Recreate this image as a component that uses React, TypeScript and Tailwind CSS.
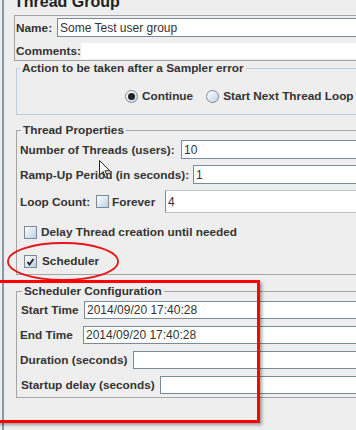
import React from "react";

const Field = ({ value = "", className = "" }: { value?: string; className?: string }) => (
  <div
    className={`flex flex-1 items-center border border-[#7a8a99] bg-white pl-[2px] text-[12px] font-normal text-[#333] ${className}`}
  >
    {value}
  </div>
);

const Check = ({ checked = false }: { checked?: boolean }) => (
  <span className="flex h-[13px] w-[13px] shrink-0 items-center justify-center border border-[#7a8a99] bg-linear-to-br from-white to-[#bccfe2]">
    {checked && (
      <svg width="9" height="9" viewBox="0 0 9 9">
        <path d="M1.5 5 L3.5 7.5 L7.5 2" fill="none" stroke="#222" strokeWidth="1.8" />
      </svg>
    )}
  </span>
);

const Radio = ({ selected = false }: { selected?: boolean }) => (
  <span className="flex h-[13px] w-[13px] shrink-0 items-center justify-center rounded-full border border-[#7a8a99] bg-linear-to-br from-white to-[#c4d4e4]">
    {selected && <span className="h-[7px] w-[7px] rounded-full bg-[#222]" />}
  </span>
);

export default function App() {
  return (
    <div className="relative h-[430px] w-[356px] overflow-hidden bg-[#eeeeee] font-['Liberation_Sans',Arial,sans-serif] text-[11.8px] font-bold leading-[14px] text-[#333333]">
      <div className="flex h-full">
        <div className="ml-[2px] w-[2px] shrink-0 bg-[#8596a8]" />

        <div className="ml-[10px] w-[420px] shrink-0">
          <h1 className="-mt-[6px] h-[16px] text-[16px] leading-[16px] font-bold text-[#222]">
            Thread Group
          </h1>

          {/* name + comments */}
          <div className="mt-[5px] border border-[#a3a3a3] pt-[2px] pb-[1px]">
            <div className="flex h-[19px] items-center">
              <span className="w-[42px] shrink-0 pl-[1px]">Name:</span>
              <Field value="Some Test user group" className="h-full" />
            </div>
            <div className="mt-[6px] flex h-[16px] items-center">
              <span className="w-[66px] shrink-0 pl-[1px]">Comments:</span>
              <div className="h-full flex-1 bg-white" />
            </div>
          </div>

          {/* sampler error action */}
          <fieldset className="ml-[2px] border border-[#b8cfe5] pt-[14px] pb-[11px]">
            <legend className="ml-[3px] px-[2px] leading-[14px]">
              Action to be taken after a Sampler error
            </legend>
            <div className="flex h-[14px] items-center pl-[108px]">
              <Radio selected />
              <span className="ml-[4px]">Continue</span>
              <span className="ml-[13px]">
                <Radio />
              </span>
              <span className="ml-[4px] whitespace-nowrap">Start Next Thread Loop</span>
            </div>
          </fieldset>

          {/* thread properties */}
          <fieldset className="mt-[8px] ml-[2px] border border-[#a5a5a5] pb-[6px]">
            <legend className="ml-[4px] px-[2px] leading-[14px]">Thread Properties</legend>
            <div className="mt-[3px] flex h-[19px] items-center pl-[3px]">
              <span className="w-[161px] shrink-0 whitespace-nowrap">Number of Threads (users):</span>
              <Field value="10" className="h-full" />
            </div>
            <div className="mt-[6px] flex h-[19px] items-center pl-[3px]">
              <span className="w-[173px] shrink-0 whitespace-nowrap">Ramp-Up Period (in seconds):</span>
              <Field value="1" className="h-full" />
            </div>
            <div className="mt-[6px] flex h-[23px] items-center pl-[3px]">
              <span className="w-[76px] shrink-0">Loop Count:</span>
              <Check />
              <span className="ml-[3px] w-[53px] shrink-0">Forever</span>
              <Field value="4" className="h-full border-[#b9c3cd] border-l-[#7a8a99]" />
            </div>
            <div className="mt-[12px] flex h-[14px] items-center pl-[7px]">
              <Check />
              <span className="ml-[4px]">Delay Thread creation until needed</span>
            </div>
            <div className="mt-[15px] flex h-[14px] items-center pl-[7px]">
              <Check checked />
              <span className="ml-[5px]">Scheduler</span>
            </div>
          </fieldset>

          {/* scheduler configuration */}
          <fieldset className="mt-[9px] ml-[2px] border border-[#a5a5a5] pt-[3px] pb-[3px]">
            <legend className="ml-[5px] px-[2px] leading-[14px]">Scheduler Configuration</legend>
            <div className="flex flex-col gap-[7px] pl-[3px]">
              <div className="flex h-[18px] items-center">
                <span className="w-[64px] shrink-0 pl-[1px]">Start Time</span>
                <Field value="2014/09/20 17:40:28" className="h-full" />
              </div>
              <div className="flex h-[18px] items-center">
                <span className="w-[63px] shrink-0">End Time</span>
                <Field value="2014/09/20 17:40:28" className="h-full" />
              </div>
              <div className="flex h-[18px] items-center">
                <span className="w-[113px] shrink-0">Duration (seconds)</span>
                <Field className="h-full" />
              </div>
              <div className="flex h-[18px] items-center">
                <span className="w-[140px] shrink-0 pl-[1px] whitespace-nowrap">Startup delay (seconds)</span>
                <Field className="h-full" />
              </div>
            </div>
          </fieldset>
        </div>
      </div>

      {/* annotation: ellipse around Scheduler */}
      <svg className="pointer-events-none absolute top-[240px] left-[5px]" width="120" height="44" viewBox="0 0 120 44">
        <ellipse cx="58" cy="21.5" rx="55" ry="18.5" fill="none" stroke="#e8151b" strokeWidth="1.8" />
      </svg>

      {/* annotation: red box */}
      <div className="pointer-events-none absolute top-[280px] -left-[10px] h-[143px] w-[270px] border-[3px] border-[#ff0000] shadow-[2px_2px_3px_rgba(0,0,0,0.35)]" />

      {/* mouse cursor */}
      <svg className="pointer-events-none absolute top-[160px] left-[99px]" width="12" height="19" viewBox="0 0 12 19">
        <path
          d="M0.5 0.5 L0.5 15 L4 11.5 L6.5 17.5 L8.5 16.7 L6 10.8 L10.8 10.8 Z"
          fill="white"
          fillOpacity="0.85"
          stroke="#222"
          strokeWidth="1"
        />
      </svg>
    </div>
  );
}
